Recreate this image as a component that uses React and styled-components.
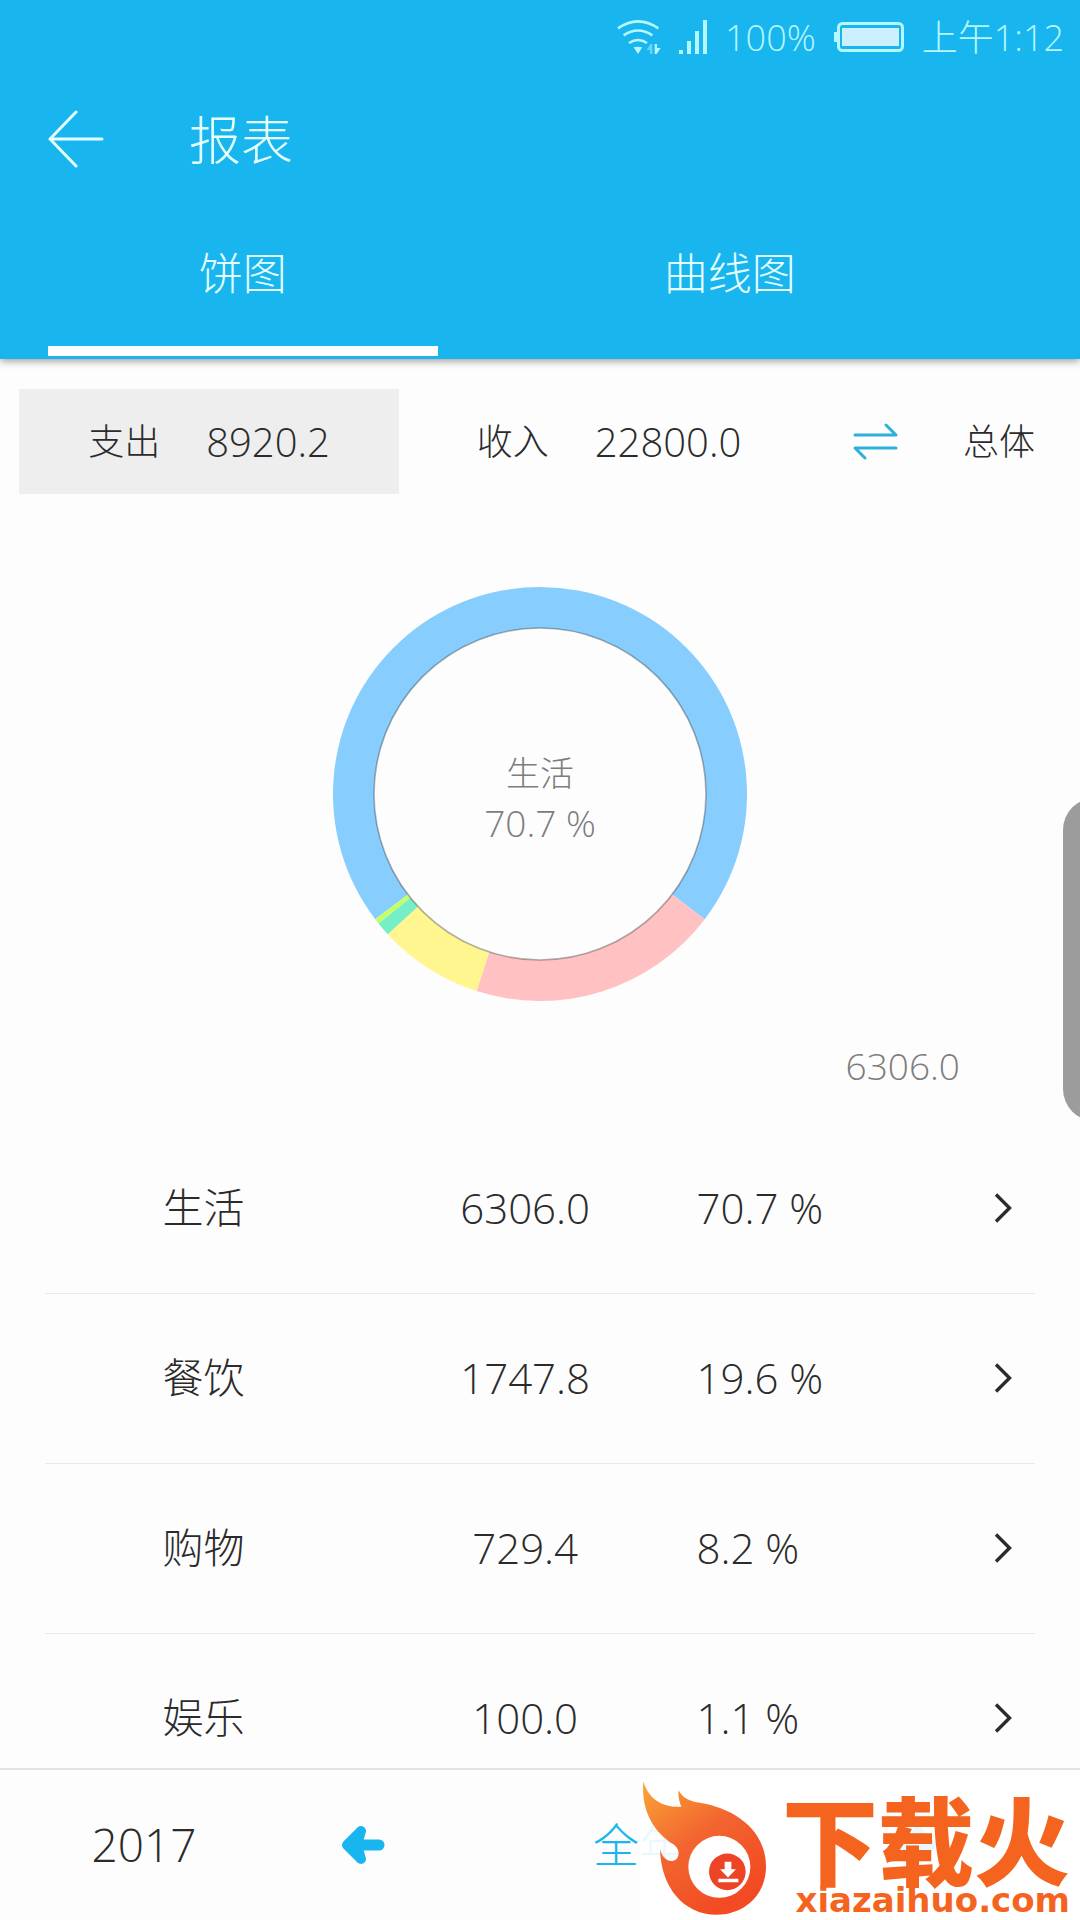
import React from "react";
import styled, { createGlobalStyle } from "styled-components";

const sky = "#19b5ef";
const ink = "#2b2b2b";

const GlobalStyle = createGlobalStyle`
  * { box-sizing: border-box; }
  body {
    margin: 0;
    background: #fdfdfd;
    color: ${ink};
    font-family: "Open Sans", "Noto Sans CJK SC", sans-serif;
    font-weight: 300;
    line-height: 1.25;
  }
  button {
    margin: 0;
    padding: 0;
    border: 0;
    background: none;
    color: inherit;
    font: inherit;
    cursor: pointer;
  }
  svg { display: block; flex: none; }
`;

const Page = styled.div`
  position: relative;
  display: flex;
  flex-direction: column;
  height: 100vh;
  overflow: hidden;
`;

const Header = styled.header`
  flex: none;
  position: relative;
  z-index: 1;
  background: ${sky};
  color: #e4ffff;
  box-shadow: 0 2px 8px rgba(0, 0, 0, 0.4);
`;

const StatusBar = styled.div`
  display: flex;
  align-items: center;
  justify-content: flex-end;
  gap: 18px;
  height: 74px;
  padding-right: 16px;
  color: #b5f7ff;
  font-size: 36px;
`;

const AppBar = styled.div`
  display: flex;
  align-items: center;
  gap: 84px;
  height: 126px;
  padding: 4px 48px 0;
`;

const Title = styled.h1`
  margin: 0;
  font-size: 52px;
  font-weight: 300;
`;

const Tabs = styled.nav`
  display: flex;
  height: 159px;
  padding: 0 58px 3px 48px;
`;

const Tab = styled.button`
  flex: ${(p) => p.$grow} 1 0;
  border-bottom: 10px solid ${(p) => (p.$active ? "#fff" : "transparent")};
  font-size: 44px;
`;

const Main = styled.main`
  flex: 1;
  min-height: 0;
  padding-top: 30px;
  overflow-y: auto;
  scrollbar-width: none;
`;

const Summary = styled.section`
  display: grid;
  grid-template-columns: 380fr 420fr 242fr;
  height: 105px;
  padding: 0 19px;
`;

const SummaryButton = styled.button`
  display: flex;
  align-items: center;
  justify-content: ${(p) => (p.$end ? "flex-end" : "center")};
  gap: ${(p) => (p.$end ? 64 : 46)}px;
  padding-right: ${(p) => (p.$end ? 26 : 0)}px;
  background: ${(p) => (p.$active ? "#eee" : "transparent")};
  font-size: 36px;
`;

const Amount = styled.span`
  font-size: 40px;
`;

const Chart = styled.section`
  padding: 93px 0 34px;
  color: #7d7d7d;
`;

const Donut = styled.div`
  display: grid;
  place-items: center;
  > * { grid-area: 1 / 1; }
`;

const DonutLabel = styled.div`
  padding-top: 8px;
  text-align: center;
  font-size: 34px;
  line-height: 50px;
`;

const Figure = styled.div`
  font-size: 37px;
`;

const Total = styled(Figure)`
  margin-top: 42px;
  padding-right: 120px;
  line-height: 46px;
  text-align: right;
`;

const List = styled.div`
  padding: 0 45px;
`;

const Table = styled.table`
  width: 100%;
  table-layout: fixed;
  border-collapse: collapse;
`;

const Row = styled.tr`
  height: 170px;
  border-bottom: 1px solid #e9e9e9;
`;

const Name = styled.th`
  width: 32%;
  padding: 0;
  font-size: 41px;
  font-weight: 300;
  text-align: center;
`;

const Value = styled.td`
  width: 33%;
  padding: 0;
  font-size: 42px;
  text-align: center;
`;

const Share = styled(Value)`
  width: 23%;
  padding-left: 8px;
  text-align: left;
`;

const Open = styled.td`
  padding: 0;
`;

const OpenButton = styled.button`
  display: flex;
  align-items: center;
  justify-content: flex-end;
  width: 100%;
  height: 80px;
  padding-right: 23px;
`;

const Footer = styled.footer`
  flex: none;
  display: grid;
  grid-template-columns: 288fr 150fr 402fr 150fr 90fr;
  height: 152px;
  border-top: 2px solid #e3e3e3;
`;

const FooterButton = styled.button`
  display: flex;
  align-items: center;
  justify-content: center;
  color: ${(p) => (p.$accent ? sky : ink)};
  font-size: 46px;
`;

const EdgeHandle = styled.div`
  position: absolute;
  top: 798px;
  right: -47px;
  width: 64px;
  height: 323px;
  border-radius: 32px;
  background: #9c9c9c;
`;

const Watermark = styled.div`
  position: absolute;
  right: 0;
  bottom: 0;
  z-index: 2;
  display: flex;
  align-items: flex-end;
  gap: 12px;
  height: 145px;
  padding: 0 10px 3px 0;
  background: rgba(255, 255, 255, 0.9);
  color: #f4641e;
`;

const Brand = styled.div`
  display: flex;
  flex-direction: column;
  align-items: flex-end;
`;

const BrandName = styled.div`
  font-family: "Noto Sans CJK SC", sans-serif;
  font-size: 96px;
  font-weight: 900;
  line-height: 92px;
`;

const BrandSite = styled.div`
  font-family: "DejaVu Sans", sans-serif;
  font-size: 34px;
  font-weight: 700;
  line-height: 34px;
`;

const CX = 207;
const OUTER = 207;
const INNER = 166;

const slices = [
  { share: 70.7, color: "#87ceff" },
  { share: 19.6, color: "#ffc1c1" },
  { share: 8.2, color: "#fff68f" },
  { share: 1.1, color: "#76eec6" },
  { share: 0.4, color: "#c4ff6a" },
];

const rows = [
  { name: "生活", value: "6306.0", share: "70.7 %" },
  { name: "餐饮", value: "1747.8", share: "19.6 %" },
  { name: "购物", value: "729.4", share: "8.2 %" },
  { name: "娱乐", value: "100.0", share: "1.1 %" },
];

const point = (r, deg) => {
  const a = (deg * Math.PI) / 180;
  return `${CX + r * Math.cos(a)} ${CX + r * Math.sin(a)}`;
};

function Ring() {
  // the largest slice is centred on twelve o'clock
  let angle = -90 - (slices[0].share * 3.6) / 2;
  return (
    <svg width="414" height="414" viewBox="0 0 414 414" aria-hidden="true">
      {slices.map(({ share, color }) => {
        const from = angle;
        const to = angle + share * 3.6;
        angle = to;
        const large = share > 50 ? 1 : 0;
        return (
          <path
            key={color}
            fill={color}
            d={`M${point(OUTER, from)} A${OUTER} ${OUTER} 0 ${large} 1 ${point(OUTER, to)} L${point(INNER, to)} A${INNER} ${INNER} 0 ${large} 0 ${point(INNER, from)}Z`}
          />
        );
      })}
      <circle cx={CX} cy={CX} r={INNER} fill="none" stroke="#000" strokeOpacity="0.3" strokeWidth="1.6" />
    </svg>
  );
}

const Wifi = () => (
  <svg width="44" height="36" viewBox="47 57 132 108" fill="none" stroke="currentColor" strokeWidth="8">
    <path d="M50 85Q110 43 171 85M67 106Q110 77 153 106M83 129Q110 111 137 129" />
    <path d="M97 142Q110 138 123 142L110 162Z" fill="currentColor" stroke="none" />
    <path d="M160 132h7v12h11l-12 18h-6z" fill="currentColor" stroke="none" />
    <path d="M153 162h-7v-12h-10l11-18h6z" fill="currentColor" stroke="none" opacity="0.5" />
  </svg>
);

const Signal = () => (
  <svg width="28" height="34" viewBox="0 0 28 34" fill="currentColor">
    <path d="M0 30h4v4H0zM8 21h4v13H8zM16 11h4v23h-4zM24 0h4v34h-4z" />
  </svg>
);

const Battery = () => (
  <svg width="70" height="30" viewBox="0 0 70 30">
    <rect x="4.5" y="1.5" width="64" height="27" rx="4" fill="none" stroke="currentColor" strokeWidth="3" />
    <path d="M0 10h4v10H0z" fill="currentColor" />
    <path d="M8 6h57v18H8z" fill="#cdf0ff" />
  </svg>
);

const BackArrow = () => (
  <svg width="57" height="58" viewBox="0 0 57 58" fill="none" stroke="currentColor" strokeWidth="3" strokeLinecap="round">
    <path d="M28 2 2 29l26 27M2 29h52" />
  </svg>
);

const Swap = () => (
  <svg width="46" height="38" viewBox="0 0 46 38" fill="none" stroke="#2fb0dc" strokeWidth="3" strokeLinecap="round" strokeLinejoin="round">
    <path d="M2 12h41L33 2M43 25H2l10 10" />
  </svg>
);

const Chevron = () => (
  <svg width="18" height="30" viewBox="0 0 18 30" fill="none" stroke={ink} strokeWidth="3.4">
    <path d="M2 1.500 15.500 15 2 28.500" />
  </svg>
);

const FatArrow = ({ flip }) => (
  <svg width="44" height="40" viewBox="0 0 44 40" fill={sky} stroke={sky} strokeLinecap="round" strokeLinejoin="round">
    <g transform={flip ? "matrix(-1 0 0 1 44 0)" : undefined}>
      <path d="M20 20h18" strokeWidth="11" />
      <path d="M20 6 6 20l14 14-4-14z" strokeWidth="10" />
    </g>
  </svg>
);

const Flame = () => (
  <svg width="130" height="137" viewBox="60 30 390 410">
    <defs>
      <linearGradient id="flame" x1="70" y1="40" x2="330" y2="400" gradientUnits="userSpaceOnUse">
        <stop offset="0" stopColor="#fba436" />
        <stop offset="0.5" stopColor="#f26530" />
        <stop offset="1" stopColor="#f24a22" />
      </linearGradient>
    </defs>
    <path
      fill="url(#flame)"
      d="M70 34C84 80 118 112 184 110C177 92 174 76 176 60C188 84 208 92 235 97C345 114 438 180 438 290C438 375 372 434 290 434C190 434 122 350 120 236C126 264 145 276 160 272C180 266 182 236 160 222C110 192 62 130 70 34Z"
    />
    <circle cx="298" cy="290" r="93" fill="#fff" />
    <circle cx="322" cy="305" r="55" fill="#ee4426" />
    <path fill="#fff" d="M314 275h20v22h14l-24 25-24-25h14zM295 326h60v10h-60z" />
  </svg>
);

export default function App() {
  return (
    <Page>
      <GlobalStyle />
      <Header>
        <StatusBar>
          <Wifi />
          <Signal />
          <span>100%</span>
          <Battery />
          <span>上午1:12</span>
        </StatusBar>
        <AppBar>
          <button aria-label="返回"><BackArrow /></button>
          <Title>报表</Title>
        </AppBar>
        <Tabs>
          <Tab $grow={2} $active>饼图</Tab>
          <Tab $grow={3}>曲线图</Tab>
        </Tabs>
      </Header>

      <Main>
        <Summary>
          <SummaryButton $active>支出<Amount>8920.2</Amount></SummaryButton>
          <SummaryButton>收入<Amount>22800.0</Amount></SummaryButton>
          <SummaryButton $end><Swap />总体</SummaryButton>
        </Summary>

        <Chart>
          <Donut>
            <Ring />
            <DonutLabel>
              生活
              <Figure>70.7 %</Figure>
            </DonutLabel>
          </Donut>
          <Total>6306.0</Total>
        </Chart>

        <List>
          <Table>
            <tbody>
              {rows.map((row) => (
                <Row key={row.name}>
                  <Name scope="row">{row.name}</Name>
                  <Value>{row.value}</Value>
                  <Share>{row.share}</Share>
                  <Open>
                    <OpenButton aria-label={row.name}><Chevron /></OpenButton>
                  </Open>
                </Row>
              ))}
            </tbody>
          </Table>
        </List>
      </Main>

      <Footer>
        <FooterButton>2017</FooterButton>
        <FooterButton aria-label="上一年"><FatArrow /></FooterButton>
        <FooterButton $accent>全年</FooterButton>
        <FooterButton aria-label="下一年"><FatArrow flip /></FooterButton>
      </Footer>

      <EdgeHandle />
      <Watermark>
        <Flame />
        <Brand>
          <BrandName>下载火</BrandName>
          <BrandSite>xiazaihuo.com</BrandSite>
        </Brand>
      </Watermark>
    </Page>
  );
}
